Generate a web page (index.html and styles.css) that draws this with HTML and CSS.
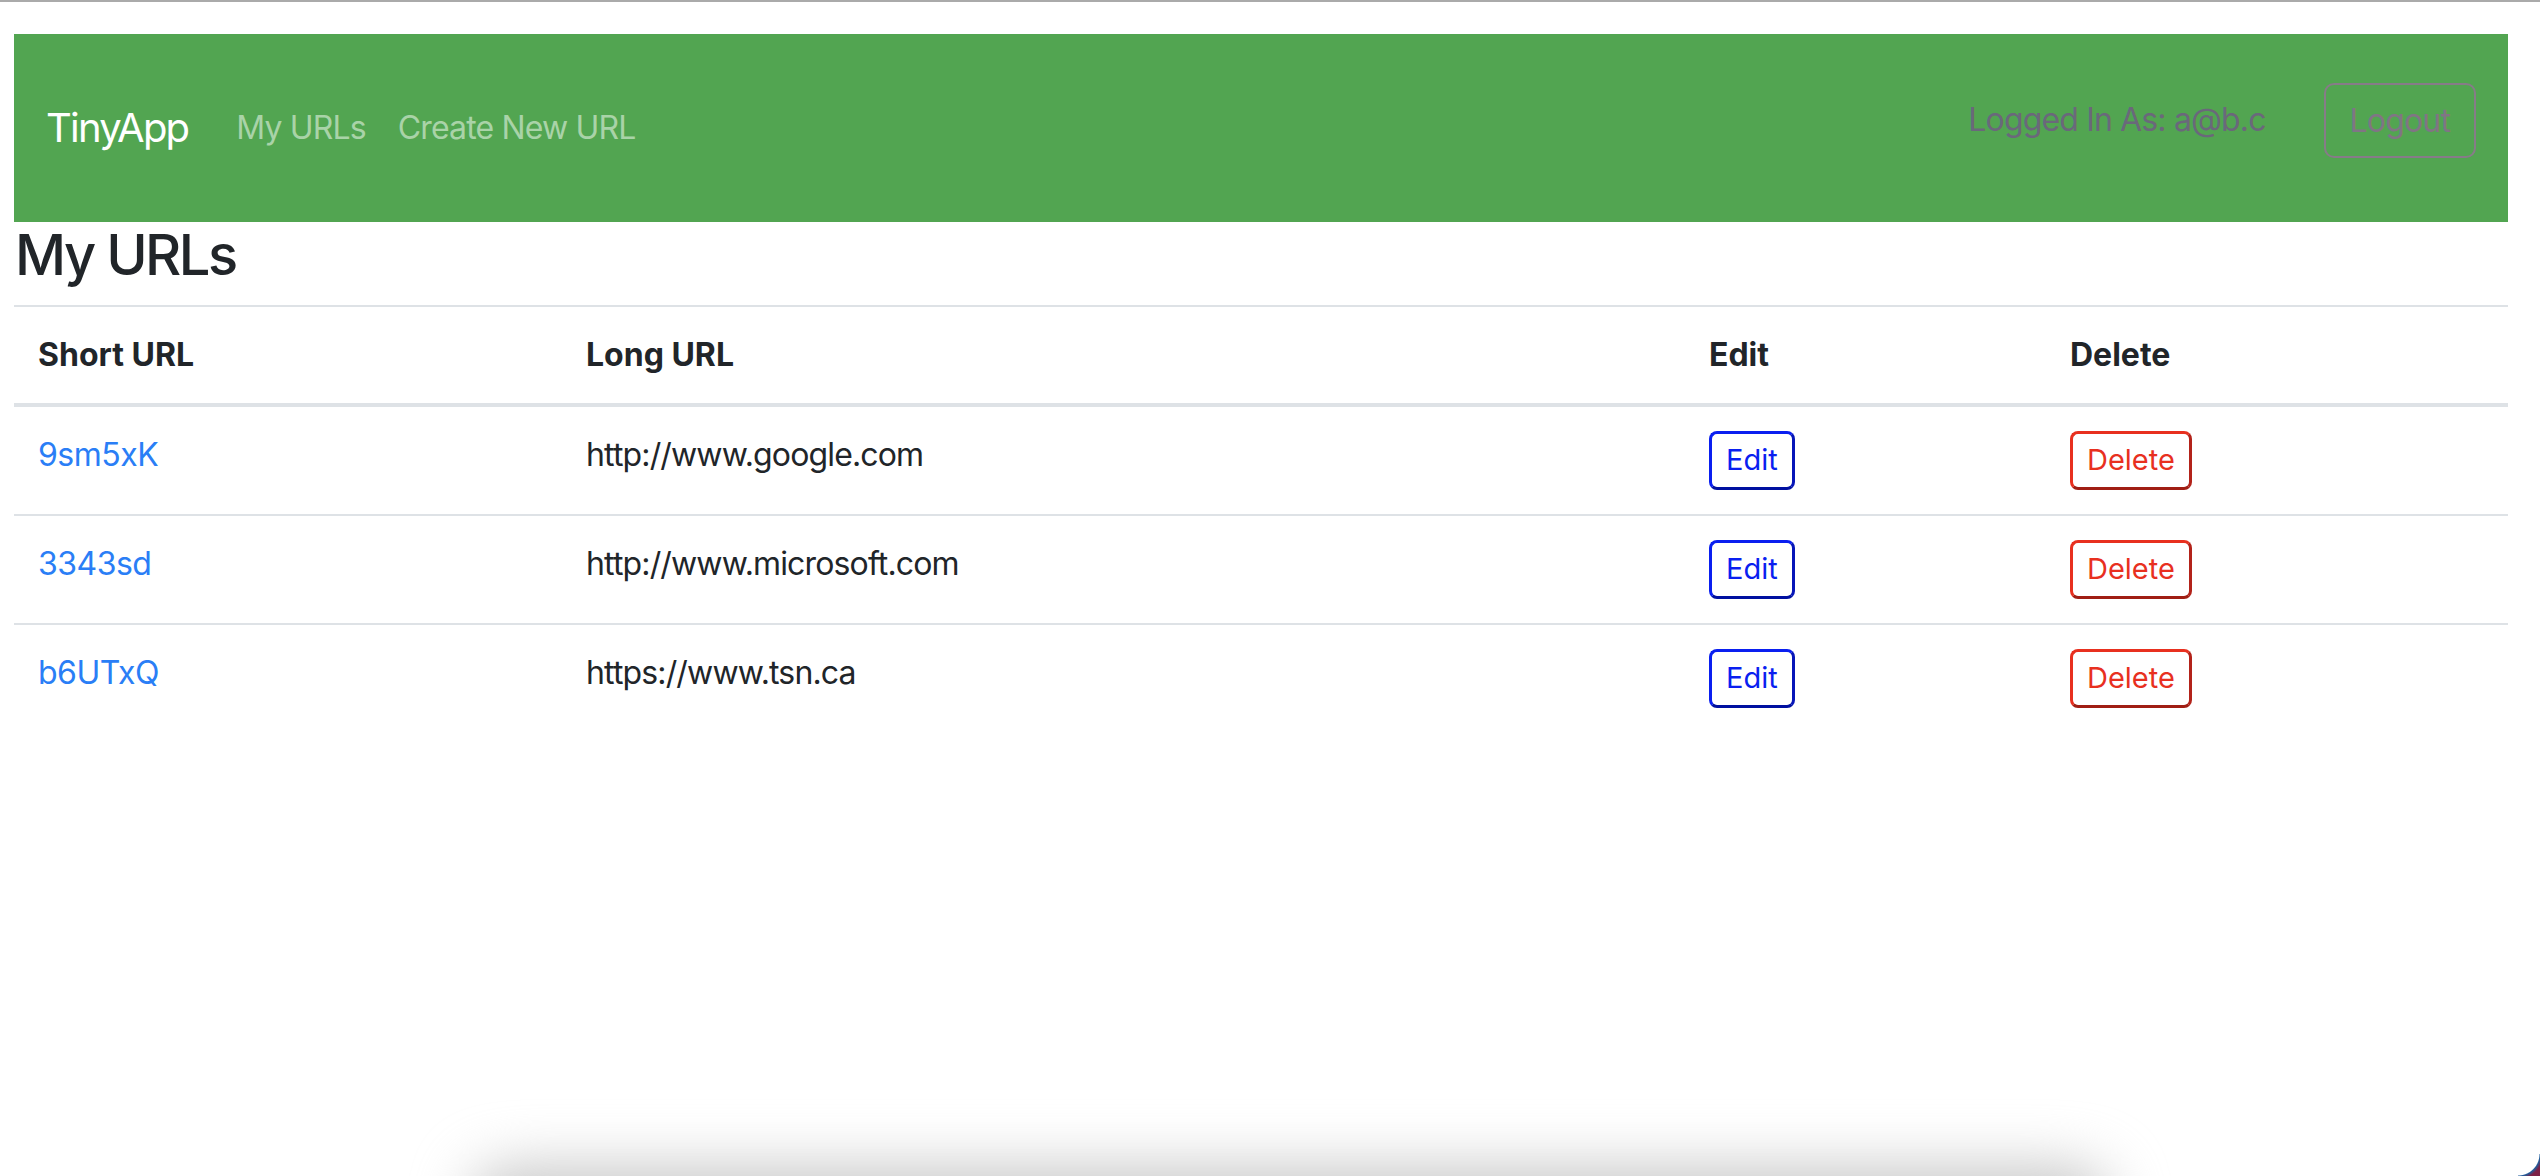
FILE: index.html
```html
<!DOCTYPE html>
<html lang="en">
<head>
<meta charset="utf-8">
<title>TinyApp - My URLs</title>
<link rel="stylesheet" href="styles.css">
</head>
<body>
  <div class="window-top"></div>
  <div class="page">
    <nav class="navbar">
      <a class="brand" href="#">TinyApp</a>
      <div class="nav-links">
        <a class="nav-link" href="#">My URLs</a>
        <a class="nav-link" href="#">Create New URL</a>
      </div>
      <div class="nav-right">
        <span class="logged-in">Logged In As: a@b.c</span>
        <button class="btn-logout" type="button">Logout</button>
      </div>
    </nav>
    <main>
      <h3 class="page-title">My URLs</h3>
      <table class="url-table">
        <thead>
          <tr>
            <th class="col-short">Short URL</th>
            <th class="col-long">Long URL</th>
            <th class="col-edit">Edit</th>
            <th class="col-delete">Delete</th>
          </tr>
        </thead>
        <tbody>
          <tr>
            <td><a class="short-link" href="#">9sm5xK</a></td>
            <td>http://www.google.com</td>
            <td><button class="btn-edit" type="button">Edit</button></td>
            <td><button class="btn-delete" type="button">Delete</button></td>
          </tr>
          <tr>
            <td><a class="short-link" href="#">3343sd</a></td>
            <td>http://www.microsoft.com</td>
            <td><button class="btn-edit" type="button">Edit</button></td>
            <td><button class="btn-delete" type="button">Delete</button></td>
          </tr>
          <tr>
            <td><a class="short-link" href="#">b6UTxQ</a></td>
            <td>https://www.tsn.ca</td>
            <td><button class="btn-edit" type="button">Edit</button></td>
            <td><button class="btn-delete" type="button">Delete</button></td>
          </tr>
        </tbody>
      </table>
    </main>
  </div>
  <div class="bottom-shadow"></div>
  <div class="corner"></div>
</body>
</html>
```

FILE: styles.css
```css
* {
  box-sizing: border-box;
}

html, body {
  margin: 0;
  padding: 0;
  background: #ffffff;
}

body {
  font-family: Inter, "Noto Sans", "Liberation Sans", sans-serif;
  font-size: 32px;
  line-height: 1.5;
  color: #212529;
  letter-spacing: -0.85px;
  overflow: hidden;
  height: 1176px;
}

.window-top {
  height: 2px;
  background: #aaaaaa;
}

.page {
  padding: 32px 32px 0 14px;
}

.navbar {
  display: flex;
  align-items: center;
  height: 188px;
  padding: 0 32px;
  background: #52a551;
}

.brand {
  color: #ffffff;
  font-size: 40px;
  line-height: 1.5;
  letter-spacing: -1.8px;
  text-decoration: none;
  margin-right: 32px;
}

.nav-links {
  display: flex;
}

.nav-link {
  color: #a9d3a8;
  text-decoration: none;
  padding: 0 16px;
}

.nav-right {
  margin-left: auto;
  margin-bottom: 16px;
  display: flex;
  align-items: center;
}

.logged-in {
  color: #6a687b;
  margin-right: 58px;
}

.btn-logout {
  font-family: inherit;
  font-size: 32px;
  line-height: 1.5;
  letter-spacing: -0.85px;
  color: #807584;
  background: transparent;
  border: 2px solid #877b88;
  border-radius: 10px;
  padding: 12px 24px;
  height: 75px;
}

.page-title {
  margin: 0 0 16px 1px;
  font-size: 56px;
  font-weight: 500;
  line-height: 1.2;
  letter-spacing: -2.5px;
  color: #212529;
}

.url-table {
  width: 100%;
  border-collapse: collapse;
  table-layout: fixed;
}

.col-short { width: 548px; }
.col-long { width: 1123px; }
.col-edit { width: 361px; }
.col-delete { width: 462px; }

.url-table th {
  text-align: left;
  font-weight: 700;
  letter-spacing: 0;
  padding: 24px;
  vertical-align: bottom;
  border-top: 2px solid #dee2e6;
  border-bottom: 4px solid #dee2e6;
}

.url-table td {
  padding: 24px;
  vertical-align: top;
  border-top: 2px solid #dee2e6;
}

.url-table tbody tr:first-child td {
  border-top: none;
}

.short-link {
  color: #2a7ef6;
  letter-spacing: -0.5px;
  text-decoration: none;
}

.btn-edit,
.btn-delete {
  font-family: inherit;
  font-size: 29px;
  line-height: 1.2;
  letter-spacing: 0;
  height: 59px;
  padding: 0 14px;
  background: #ffffff;
  border-width: 3px;
  border-style: solid;
  border-radius: 8px;
}

.btn-edit {
  color: #0a1ff0;
  border-color: #0a1ff0 #0716b8 #0010a0 #0a1ff0;
}

.btn-delete {
  color: #e8301f;
  border-color: #e8301f #b3231a #a01e14 #e8301f;
}

.bottom-shadow {
  position: fixed;
  left: 470px;
  width: 1640px;
  bottom: -70px;
  height: 80px;
  background: #c8c8c8;
  border-radius: 40px;
  filter: blur(28px);
}

.corner {
  position: fixed;
  right: 0;
  bottom: 0;
  width: 22px;
  height: 22px;
  background: radial-gradient(circle at 0 0, transparent 21px, #1f5c9a 22px, #7d2146 25px);
}
```
